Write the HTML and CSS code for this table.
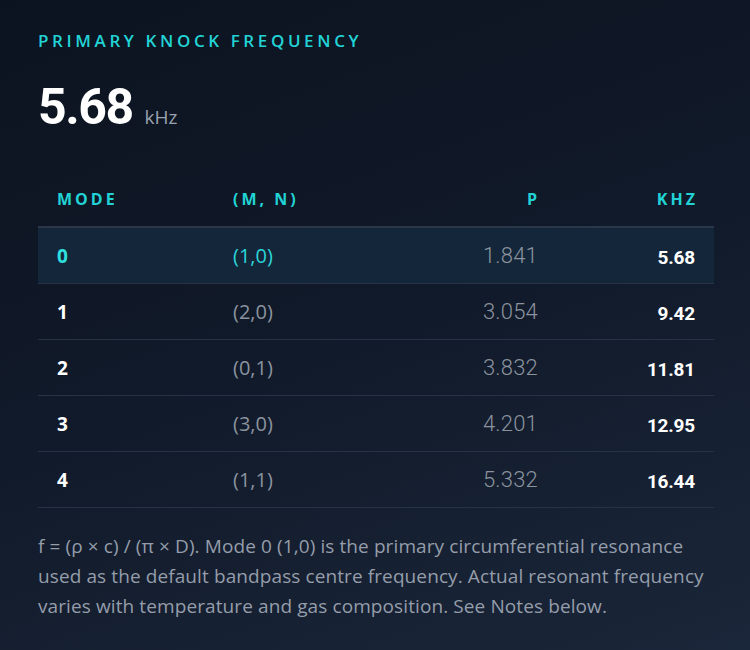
FILE: index.html
```html
<!DOCTYPE html>
<html>
<head>
<meta charset="utf-8">
<link rel="stylesheet" href="styles.css">
</head>
<body>
<div class="card">
  <div class="eyebrow">PRIMARY KNOCK FREQUENCY</div>
  <div class="hero"><span class="hero-num">5.68</span><span class="hero-unit">kHz</span></div>
  <div class="table">
    <div class="row head">
      <div class="c1">MODE</div><div class="c2">(M, N)</div><div class="c3">P</div><div class="c4">KHZ</div>
    </div>
    <div class="row active">
      <div class="c1 mode">0</div><div class="c2 mn">(1,0)</div><div class="c3 p">1.841</div><div class="c4 k">5.68</div>
    </div>
    <div class="row">
      <div class="c1 mode">1</div><div class="c2 mn">(2,0)</div><div class="c3 p">3.054</div><div class="c4 k">9.42</div>
    </div>
    <div class="row">
      <div class="c1 mode">2</div><div class="c2 mn">(0,1)</div><div class="c3 p">3.832</div><div class="c4 k">11.81</div>
    </div>
    <div class="row">
      <div class="c1 mode">3</div><div class="c2 mn">(3,0)</div><div class="c3 p">4.201</div><div class="c4 k">12.95</div>
    </div>
    <div class="row">
      <div class="c1 mode">4</div><div class="c2 mn">(1,1)</div><div class="c3 p">5.332</div><div class="c4 k">16.44</div>
    </div>
  </div>
  <p class="note">f = (ρ × c) / (π × D). Mode 0 (1,0) is the primary circumferential resonance used as the default bandpass centre frequency. Actual resonant frequency varies with temperature and gas composition. See Notes below.</p>
</div>
</body>
</html>
```
FILE: styles.css
```css
html, body { margin: 0; padding: 0; }
body {
  width: 750px;
  height: 650px;
  background: linear-gradient(160deg, #0c1320 0%, #111a2a 50%, #1a2639 100%);
  font-family: "Open Sans", "Noto Sans", sans-serif;
  overflow: hidden;
}
.card { padding: 30px 36px 0 38px; }
.eyebrow {
  color: #22d3d6;
  font-family: "Open Sans", sans-serif;
  font-weight: 600;
  font-size: 17px;
  letter-spacing: 3.6px;
  line-height: 22px;
}
.hero { margin-top: 28px; display: flex; align-items: baseline; height: 54px; }
.hero-num {
  color: #ffffff;
  font-family: "Roboto", sans-serif;
  font-weight: 700;
  font-size: 50px;
  letter-spacing: -1.5px;
  line-height: 54px;
}
.hero-unit {
  color: #9aa2ad;
  font-family: "Open Sans", sans-serif;
  font-size: 19px;
  margin-left: 12px;
}
.table { margin-top: 38px; width: 676px; }
.row {
  display: grid;
  grid-template-columns: 176px 176px 166px 158px;
  height: 56px;
  align-items: center;
  border-bottom: 1px solid #273244;
  box-sizing: border-box;
}
.row.head { height: 56px; border-bottom: 2px solid #2b3748; }
.row.head > div {
  color: #22d3d6;
  font-weight: 700;
  font-size: 16px;
  letter-spacing: 3px;
}
.c1 { padding-left: 19px; }
.c2 { padding-left: 19px; }
.c3 { text-align: right; padding-right: 18px; }
.c4 { text-align: right; padding-right: 19px; }
.row.head .c3 { padding-right: 16px; }
.row.head .c4 { padding-right: 16px; }
.row.active { background: #14273a; }
.mode { color: #ffffff; font-weight: 700; font-size: 19px; }
.row.active .mode { color: #2ee0e0; }
.mn { color: #8b939e; font-size: 20px; }
.row.active .mn { color: #2ad4d8; }
.p { color: #8b939e; font-size: 22px; letter-spacing: 0.2px; font-family: "Roboto", sans-serif; font-weight: 300; }
.k { color: #ffffff; font-family: "Roboto", sans-serif; font-weight: 700; font-size: 19px; letter-spacing: -0.2px; padding-top: 4px; }
.note {
  margin: 23px 0 0 0;
  color: #959daa;
  font-size: 19px;
  letter-spacing: 0.1px;
  line-height: 30px;
  width: 680px;
}
```
